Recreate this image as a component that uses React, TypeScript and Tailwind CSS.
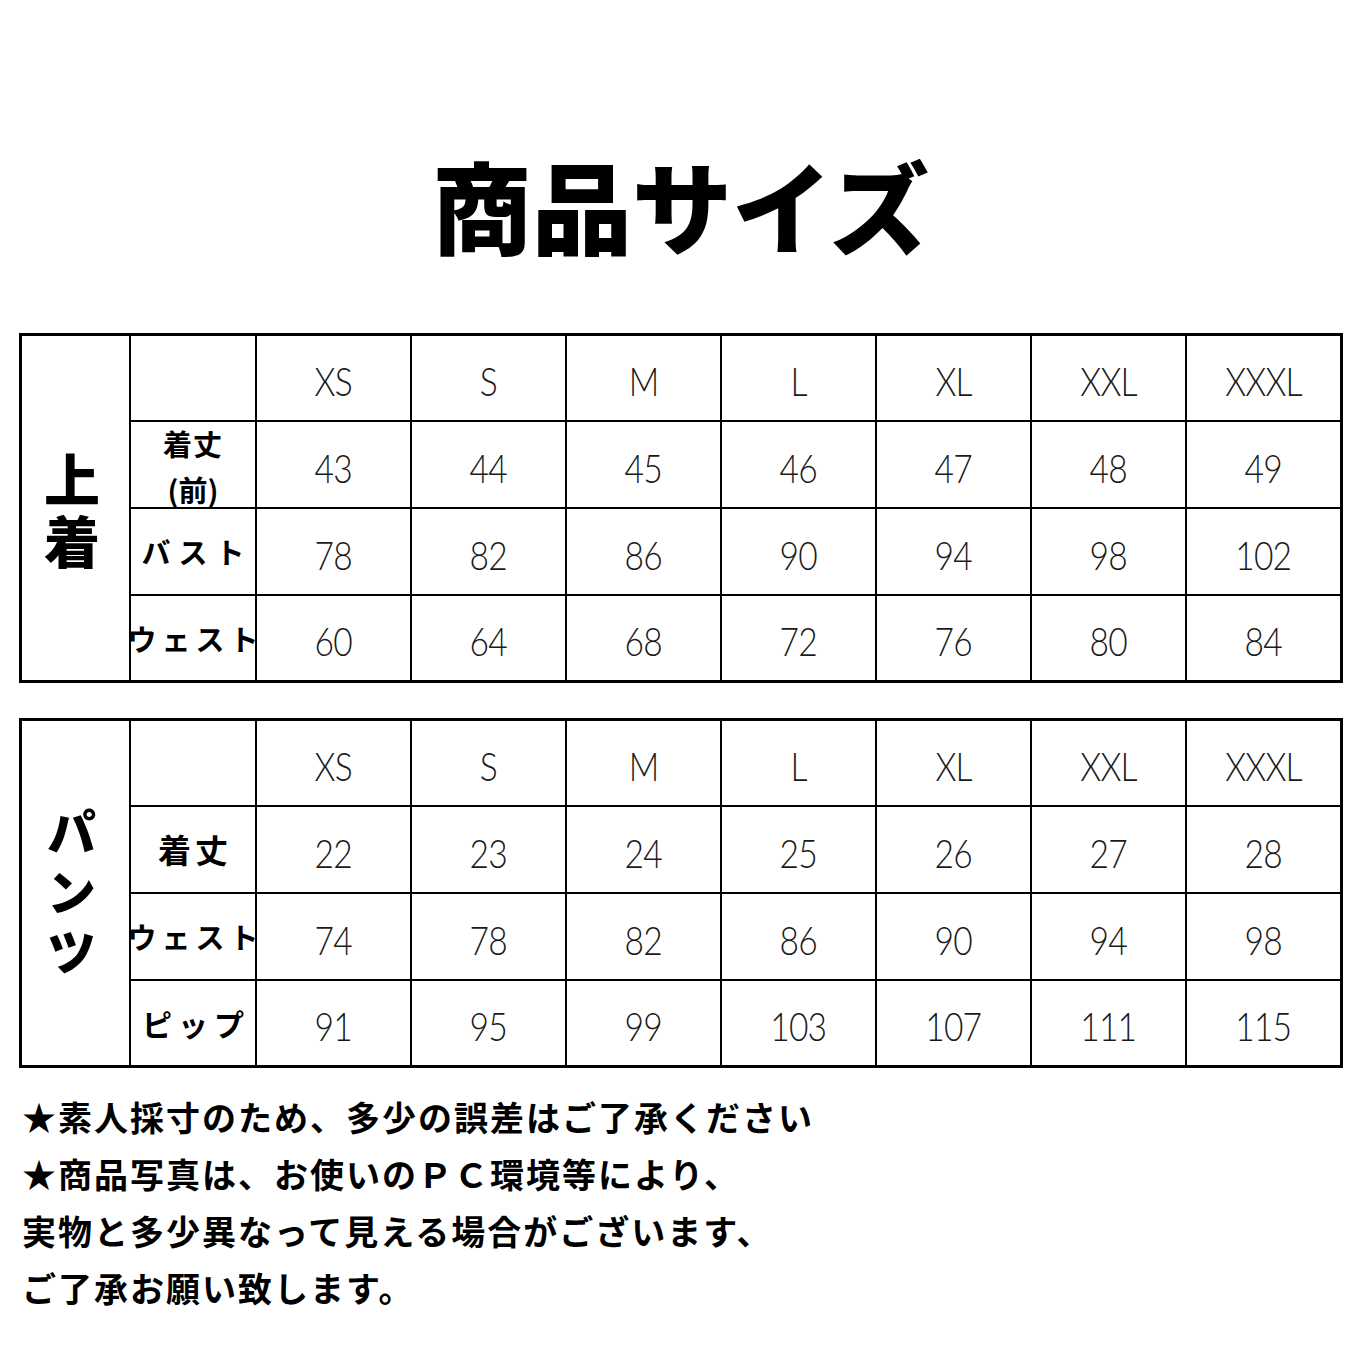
import React from "react";

const sizes = ["XS", "S", "M", "L", "XL", "XXL", "XXXL"];

const jp = "[font-family:'Noto_Sans_CJK_JP',sans-serif]";

function Num({ children }: { children: React.ReactNode }) {
  return (
    <div className="bg-white flex items-center justify-center pt-[6px]">
      <span className="inline-block scale-x-[0.84] [font-family:'Lato','Roboto',sans-serif] font-light text-[40px] leading-none text-[#1a1a1a] tracking-[-1px]">
        {children}
      </span>
    </div>
  );
}

function RowLabel({ children, cls }: { children: React.ReactNode; cls: string }) {
  return (
    <div className="bg-white flex items-center justify-center overflow-visible relative z-10">
      <div className={`${jp} font-bold text-black whitespace-nowrap text-center ${cls}`}>{children}</div>
    </div>
  );
}

type Row = { label: React.ReactNode; cls: string; vals: number[] };

function SizeTable({ side, rows }: { side: React.ReactNode; rows: Row[] }) {
  return (
    <div className="ml-[19px] w-[1324px] grid grid-cols-[107px_124px_repeat(7,153px)] grid-rows-[84px_85px_85px_84px] gap-[2px] bg-black border-[3px] border-black">
      <div className="row-span-4 bg-white flex items-center justify-center">{side}</div>
      <div className="bg-white" />
      {sizes.map((s) => (
        <Num key={s}>{s}</Num>
      ))}
      {rows.map((r, i) => (
        <React.Fragment key={i}>
          <RowLabel cls={r.cls}>{r.label}</RowLabel>
          {r.vals.map((v, j) => (
            <Num key={j}>{v}</Num>
          ))}
        </React.Fragment>
      ))}
    </div>
  );
}

export default function App() {
  const topRows: Row[] = [
    {
      label: (
        <div className="flex flex-col items-center leading-[46px] text-[29px] mt-[2px]">
          <span className="tracking-[1px]">着丈</span>
          <span>(前)</span>
        </div>
      ),
      cls: "",
      vals: [43, 44, 45, 46, 47, 48, 49],
    },
    { label: "バスト", cls: "text-[29px] tracking-[8px] pl-[8px] leading-none", vals: [78, 82, 86, 90, 94, 98, 102] },
    { label: "ウェスト", cls: "text-[29px] tracking-[5px] pl-[5px] leading-none", vals: [60, 64, 68, 72, 76, 80, 84] },
  ];
  const bottomRows: Row[] = [
    { label: "着丈", cls: "text-[33px] tracking-[4px] pl-[4px] leading-none", vals: [22, 23, 24, 25, 26, 27, 28] },
    { label: "ウェスト", cls: "text-[29px] tracking-[5px] pl-[5px] leading-none", vals: [74, 78, 82, 86, 90, 94, 98] },
    { label: "ピップ", cls: "text-[30px] tracking-[6px] pl-[6px] leading-none", vals: [91, 95, 99, 103, 107, 111, 115] },
  ];

  return (
    <div className="w-[1361px] h-[1361px] bg-white pt-[154px] overflow-hidden">
      <h1 className={`${jp} font-black text-[100px] leading-none text-black text-center h-[100px]`}>
        商品サイズ
      </h1>
      <div className="mt-[79px]">
        <SizeTable
          side={
            <div className={`${jp} font-black text-[56px] leading-none tracking-[6px] text-black [writing-mode:vertical-rl] mt-[12px] mr-[8px]`}>
              上着
            </div>
          }
          rows={topRows}
        />
      </div>
      <div className="mt-[35px]">
        <SizeTable
          side={
            <div className={`${jp} font-black text-[50px] leading-none tracking-[10px] text-black [writing-mode:vertical-rl] mt-[8px] mr-[8px]`}>
              パンツ
            </div>
          }
          rows={bottomRows}
        />
      </div>
      <div className={`${jp} font-bold text-[34px] leading-[57px] text-black mt-[20px] pl-[22px] tracking-[2px]`}>
        <p>★素人採寸のため、多少の誤差はご了承ください</p>
        <p>★商品写真は、お使いのＰＣ環境等により、</p>
        <p>実物と多少異なって見える場合がございます、</p>
        <p>ご了承お願い致します。</p>
      </div>
    </div>
  );
}
